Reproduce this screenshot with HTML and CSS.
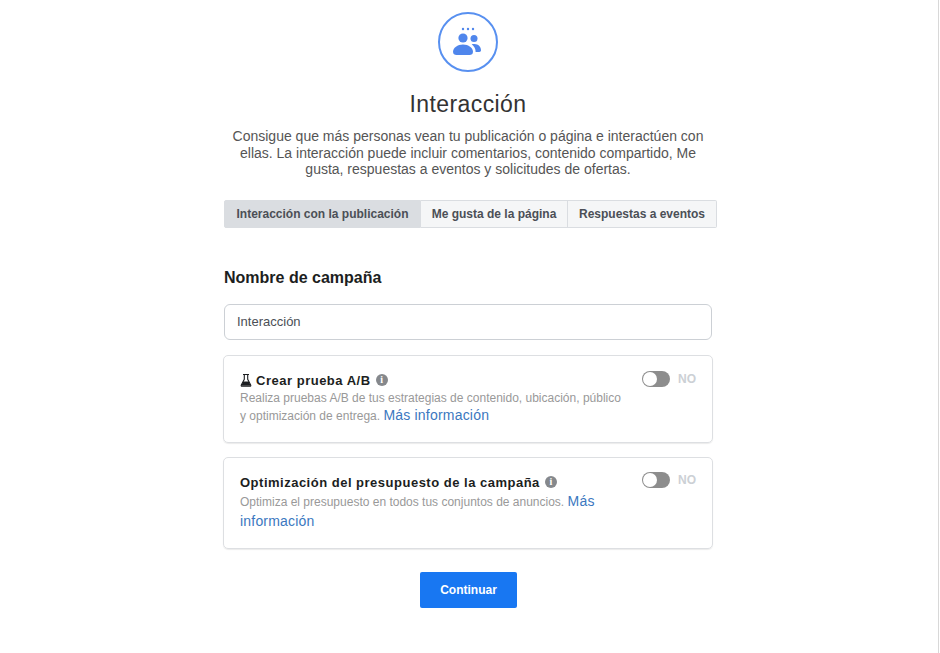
FILE: index.html
```html
<!DOCTYPE html>
<html lang="es">
<head>
  <meta charset="UTF-8">
  <meta name="viewport" content="width=device-width, initial-scale=1.0">
  <title>Interacción</title>
  <link rel="stylesheet" href="styles.css">
</head>
<body>
  <div class="page">
    <div class="objective">
      <div class="objective-icon">
        <svg width="30" height="30" viewBox="0 0 30 30">
          <circle cx="10" cy="2" r="1.200"/>
          <circle cx="15" cy="2" r="1.200"/>
          <circle cx="20" cy="2" r="1.200"/>
          <circle cx="21" cy="11.500" r="3.500"/>
          <path d="M21.500 17c3.700 0 6.500 2.800 6.500 6.300 0 1.300-.7 1.700-1.700 1.700h-3.700c.1-3-1.300-5.600-3.900-7.700.8-.2 1.700-.3 2.800-.3z"/>
          <circle cx="10" cy="11" r="4.600"/>
          <path d="M10 17.500c-5.500 0-10 3.600-10 7.300 0 2.200 1.500 3.200 3.500 3.200h13c2 0 3.500-1 3.500-3.200 0-3.700-4.500-7.300-10-7.300z"/>
        </svg>
      </div>
      <h1>Interacción</h1>
      <p class="intro">Consigue que más personas vean tu publicación o página e interactúen con ellas. La interacción puede incluir comentarios, contenido compartido, Me gusta, respuestas a eventos y solicitudes de ofertas.</p>
    </div>

    <div class="tabs">
      <button class="tab active">Interacción con la publicación</button>
      <button class="tab">Me gusta de la página</button>
      <button class="tab">Respuestas a eventos</button>
    </div>

    <h2 class="section-title">Nombre de campaña</h2>
    <input class="name-input" type="text" value="Interacción">

    <div class="option-card card-ab">
      <div class="option-text">
        <h3>
          <svg class="flask" width="12" height="13" viewBox="0 0 12 13">
            <path d="M3 .5h6M4.300 1v4.300L1.300 11c-.3.7 0 1.300.8 1.300h7.800c.8 0 1.100-.6.800-1.300L7.700 5.300V1" fill="none" stroke="#1c1e21" stroke-width="1.100"/>
            <path d="M3.200 7.500h5.600l1.900 4.200H1.300z" fill="#1c1e21"/>
          </svg>
          Crear prueba A/B
          <span class="info">i</span>
        </h3>
        <p>Realiza pruebas A/B de tus estrategias de contenido, ubicación, público y optimización de entrega. <a href="#">Más información</a></p>
      </div>
      <div class="switch-row">
        <span class="switch"></span>
        <span class="switch-label">NO</span>
      </div>
    </div>

    <div class="option-card card-budget">
      <div class="option-text">
        <h3>Optimización del presupuesto de la campaña <span class="info">i</span></h3>
        <p>Optimiza el presupuesto en todos tus conjuntos de anuncios. <a href="#">Más información</a></p>
      </div>
      <div class="switch-row">
        <span class="switch"></span>
        <span class="switch-label">NO</span>
      </div>
    </div>

    <div class="actions">
      <button class="continue">Continuar</button>
    </div>
  </div>
</body>
</html>
```

FILE: styles.css
```css
* {
  box-sizing: border-box;
}
html, body {
  height: 100%;
}
body {
  margin: 0;
  background: #fff;
  color: #1c1e21;
  font-family: 'Liberation Sans', Arial, sans-serif;
  overflow: hidden;
}
.page {
  height: 653px;
  width: 939px;
  border-right: 1px solid #d8d8d8;
  padding: 12px 0 0 223px;
}
.objective {
  width: 490px;
  display: flex;
  flex-direction: column;
  align-items: center;
}
.objective-icon {
  width: 60px;
  height: 60px;
  margin-left: -1px;
  border: 2px solid #5890f0;
  border-radius: 50%;
  display: flex;
  align-items: center;
  justify-content: center;
}
.objective-icon svg {
  fill: #4f86ec;
}
h1 {
  margin: 18px 0 0;
  font-size: 23px;
  line-height: 28px;
  font-weight: 400;
  letter-spacing: .4px;
  color: #333;
}
.intro {
  margin: 10px 0 0;
  width: 490px;
  font-size: 14px;
  line-height: 16.500px;
  text-align: center;
  color: #555;
}
.tabs {
  display: flex;
  width: 493px;
  height: 28px;
  margin: 22px 0 0 1px;
}
.tab {
  padding: 0;
  border: 1px solid #dadde1;
  border-left-width: 0;
  background: #f5f6f7;
  color: #4b4f56;
  font-family: inherit;
  font-size: 12px;
  font-weight: 700;
}
.tab:nth-child(1) {
  width: 197px;
  border-left-width: 1px;
  border-radius: 2px 0 0 2px;
}
.tab:nth-child(2) {
  width: 147px;
}
.tab:nth-child(3) {
  width: 149px;
  border-radius: 0 2px 2px 0;
}
.tab.active {
  background: #dadde1;
}
.section-title {
  margin: 40px 0 0 1px;
  font-size: 16px;
  line-height: 19px;
  font-weight: 700;
  color: #1c1e21;
}
.name-input {
  display: block;
  width: 488px;
  height: 36px;
  margin: 17px 0 0 1px;
  padding: 0 12px;
  border: 1px solid #ccd0d5;
  border-radius: 6px;
  background: #fff;
  color: #4b4f56;
  font-family: inherit;
  font-size: 13px;
}
.option-card {
  width: 490px;
  display: flex;
  justify-content: space-between;
  padding: 17px 16px 0;
  border: 1px solid #dddfe2;
  border-radius: 5px;
  box-shadow: 0 1px 1px rgba(0, 0, 0, .08);
}
.card-ab {
  height: 88px;
  margin-top: 15px;
}
.card-budget {
  height: 92px;
  margin-top: 14px;
}
.option-text {
  width: 385px;
}
.option-text h3 {
  margin: 0;
  font-size: 13px;
  line-height: 16px;
  font-weight: 700;
  letter-spacing: .5px;
  color: #1c1e21;
}
.flask {
  vertical-align: -2px;
}
.info {
  display: inline-block;
  width: 12px;
  height: 12px;
  margin-left: 1px;
  border-radius: 50%;
  background: #85888c;
  color: #fff;
  font-family: 'Liberation Serif', serif;
  font-size: 10px;
  line-height: 12px;
  font-weight: 700;
  letter-spacing: 0;
  text-align: center;
  vertical-align: 2px;
}
.option-text p {
  margin: 1px 0 0;
  font-size: 12px;
  color: #999;
}
.card-ab p {
  line-height: 17px;
}
.card-budget p {
  line-height: 19.500px;
}
.option-text a {
  color: #3b78c0;
  font-size: 14px;
  letter-spacing: .2px;
  text-decoration: none;
}
.switch-row {
  display: flex;
  align-items: center;
  gap: 8px;
  height: 16px;
  margin-top: -2px;
}
.card-budget .switch-row {
  margin-top: -3px;
}
.switch {
  width: 28px;
  height: 16px;
  border-radius: 8px;
  background: #8d8d8d;
  display: block;
  position: relative;
}
.switch::before {
  content: "";
  position: absolute;
  left: 1px;
  top: 1px;
  width: 14px;
  height: 14px;
  border-radius: 50%;
  background: #fff;
}
.switch-label {
  font-size: 12px;
  font-weight: 700;
  color: #ccd0d5;
}
.actions {
  width: 490px;
  margin-top: 23px;
  display: flex;
  justify-content: center;
}
.continue {
  width: 97px;
  height: 36px;
  margin-left: 1px;
  border: 0;
  border-radius: 2px;
  background: #1877f2;
  color: #fff;
  font-family: inherit;
  font-size: 12px;
  font-weight: 700;
}
```
